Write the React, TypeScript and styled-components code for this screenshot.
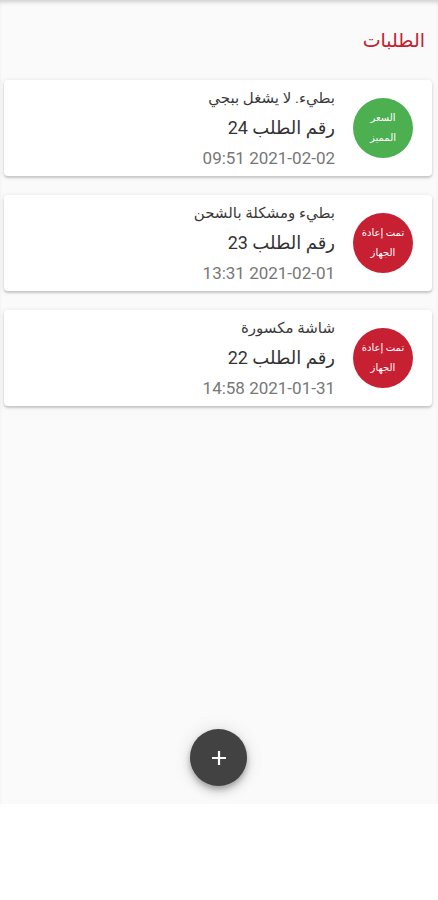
import React from 'react';
import styled, { createGlobalStyle } from 'styled-components';

const GlobalStyle = createGlobalStyle`
  html, body {
    margin: 0;
    padding: 0;
    background: #ffffff;
  }
  body {
    font-family: Roboto, "DejaVu Sans", sans-serif;
  }
`;

const Screen = styled.div`
  position: relative;
  height: 804px;
  background: #fafafa;
  box-shadow: inset 0 4px 4px -2px rgba(0, 0, 0, 0.18);
  direction: rtl;
`;

const Header = styled.div`
  display: flex;
  align-items: center;
  height: 80px;
  padding: 0 13px;
  box-sizing: border-box;
`;

const Title = styled.h1`
  margin: 0;
  font-size: 19px;
  font-weight: 400;
  color: #c3202e;
`;

const List = styled.div`
  display: flex;
  flex-direction: column;
  gap: 19px;
  padding: 0 6px 0 4px;
`;

const Card = styled.div`
  display: flex;
  align-items: center;
  gap: 18px;
  height: 96px;
  padding: 0 19px;
  box-sizing: border-box;
  background: #ffffff;
  border-radius: 4px;
  box-shadow: 0 2px 2px rgba(0, 0, 0, 0.14), 0 1px 5px rgba(0, 0, 0, 0.12);
`;

const Badge = styled.div<{ $color: string }>`
  flex: none;
  width: 60px;
  height: 60px;
  border-radius: 50%;
  background: ${({ $color }) => $color};
  color: #ffffff;
  display: flex;
  align-items: center;
  justify-content: center;
  text-align: center;
  font-size: 10px;
  line-height: 20px;
  padding: 0 4px;
  box-sizing: border-box;
`;

const Info = styled.div`
  display: flex;
  flex-direction: column;
`;

const Problem = styled.div`
  font-size: 15px;
  line-height: 30px;
  color: #3a3a3a;
`;

const OrderNo = styled.div`
  font-size: 18px;
  line-height: 30px;
  color: #333333;
`;

const DateText = styled.div`
  font-size: 17px;
  line-height: 30px;
  color: #777777;
`;

const Fab = styled.button`
  position: absolute;
  left: 190px;
  top: 729px;
  width: 57px;
  height: 57px;
  border: 0;
  border-radius: 50%;
  background: #424242;
  display: flex;
  align-items: center;
  justify-content: center;
  box-shadow: 0 6px 10px rgba(0, 0, 0, 0.14), 0 1px 18px rgba(0, 0, 0, 0.12),
    0 3px 5px rgba(0, 0, 0, 0.2);
  padding: 0;
`;

const orders = [
  {
    problem: 'بطيء. لا يشغل ببجي',
    number: 24,
    date: '2021-02-02 09:51',
    status: 'السعر المميز',
    color: '#4caf50',
  },
  {
    problem: 'بطيء ومشكلة بالشحن',
    number: 23,
    date: '2021-02-01 13:31',
    status: 'تمت إعادة الجهاز',
    color: '#c62032',
  },
  {
    problem: 'شاشة مكسورة',
    number: 22,
    date: '2021-01-31 14:58',
    status: 'تمت إعادة الجهاز',
    color: '#c62032',
  },
];

export default function App() {
  return (
    <>
      <GlobalStyle />
      <Screen>
        <Header>
          <Title>الطلبات</Title>
        </Header>
        <List>
          {orders.map((o) => (
            <Card key={o.number}>
              <Badge $color={o.color}>{o.status}</Badge>
              <Info>
                <Problem>{o.problem}</Problem>
                <OrderNo>رقم الطلب {o.number}</OrderNo>
                <DateText>{o.date}</DateText>
              </Info>
            </Card>
          ))}
        </List>
        <Fab aria-label="add">
          <svg width="16" height="16" viewBox="0 0 16 16">
            <path d="M8 1v14M1 8h14" stroke="#ffffff" strokeWidth="2.2" />
          </svg>
        </Fab>
      </Screen>
    </>
  );
}
